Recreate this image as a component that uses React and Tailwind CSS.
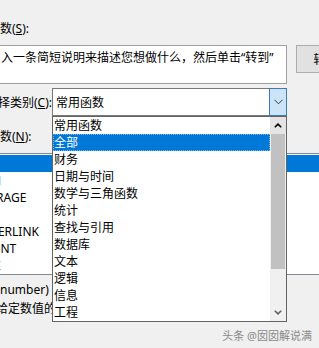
export default function App() {
  const categories = [
    "常用函数",
    "全部",
    "财务",
    "日期与时间",
    "数学与三角函数",
    "统计",
    "查找与引用",
    "数据库",
    "文本",
    "逻辑",
    "信息",
    "工程",
  ];
  const functions = ["ABS", "SUM", "AVERAGE", "IF", "HYPERLINK", "COUNT", "MAX"];

  return (
    <div className="relative w-[319px] h-[348px] overflow-hidden bg-[#f0f0f0] text-[12px] text-black font-['Noto_Sans','Noto_Sans_CJK_SC',sans-serif]">
      <div className="flex flex-col pt-[20px]">
        <div className="h-[17px] leading-[17px]">
          数(<span className="underline">S</span>):
        </div>

        <div className="flex items-start mt-[8px]">
          <div className="w-[287px] h-[39px] shrink-0 bg-white border-y border-r border-[#a0a0a0] pl-[1px] pt-[3px] leading-[17px] whitespace-nowrap overflow-hidden">
            入一条简短说明来描述您想做什么，然后单击“转到”
          </div>
          <button className="ml-[9px] w-[75px] h-[28px] shrink-0 bg-[#e1e1e1] border border-[#adadad] leading-[17px]">
            转到(G)
          </button>
        </div>

        <div className="flex items-center mt-[4px] h-[28px]">
          <div className="w-[52px] shrink-0 -ml-[2px] pl-0 leading-[17px] whitespace-nowrap">
            择类别(<span className="underline">C</span>):
          </div>
          <div className="flex w-[235px] h-[28px] shrink-0 ml-[2px] bg-white border border-[#7a7a7a]">
            <div className="flex-1 pl-[3px] flex items-center leading-[17px]">常用函数</div>
            <div className="w-[18px] -my-px -mr-px flex items-center justify-center bg-[#cce4f7] border border-[#3d7ab8]">
              <svg width="9" height="6" viewBox="0 0 9 6">
                <path d="M0.5 0.8 L4.5 4.8 L8.5 0.8" fill="none" stroke="#3c3c3c" strokeWidth="1" />
              </svg>
            </div>
          </div>
        </div>

        <div className="mt-[12px] h-[17px] leading-[17px]">
          数(<span className="underline">N</span>):
        </div>

        <div className="mt-[8px] -ml-[30px] w-[420px] bg-white border-y border-[#828790] pt-[1px]">
          {functions.map((f, i) => (
            <div
              key={f}
              className={
                i === 0
                  ? "h-[17px] leading-[17px] pl-[5px] bg-[#0078d7] text-white"
                  : "h-[17px] leading-[17px] pl-[5px]"
              }
            >
              {f}
            </div>
          ))}
        </div>

        <div className="mt-[6px] h-[17px] leading-[17px] whitespace-nowrap">number)</div>
        <div className="mt-[2px] -ml-[4px] h-[17px] leading-[17px] whitespace-nowrap">
          给定数值的绝对值，即不带符号的数值
        </div>
      </div>

      <div className="absolute left-[52px] top-[116px] w-[235px] h-[206px] flex bg-white border border-[#646464]">
        <div className="flex-1 flex flex-col">
          {categories.map((c) => (
            <div
              key={c}
              className={
                c === "全部"
                  ? "h-[17px] leading-[15px] pl-0 bg-[#0078d7] text-white border border-dotted border-[#7fb3e6]"
                  : "h-[17px] leading-[17px] pl-[1px]"
              }
            >
              {c}
            </div>
          ))}
        </div>
        <div className="w-[16px] flex flex-col bg-[#f0f0f0]">
          <div className="h-[17px] flex items-center justify-center bg-[#e4e4e4]">
            <svg width="8" height="5" viewBox="0 0 8 5">
              <path d="M0.8 4.3 L4 1.2 L7.2 4.3" fill="none" stroke="#000" strokeWidth="1.6" />
            </svg>
          </div>
          <div className="h-[135px] mx-[1px] bg-[#c1c1c1]" />
          <div className="flex-1" />
          <div className="h-[17px] flex items-center justify-center">
            <svg width="8" height="5" viewBox="0 0 8 5">
              <path d="M0.8 0.7 L4 3.8 L7.2 0.7" fill="none" stroke="#606060" strokeWidth="1.6" />
            </svg>
          </div>
        </div>
      </div>

      <div className="absolute right-[7px] bottom-[5px] text-[11px] leading-[14px] text-[#8a8a8a] whitespace-nowrap">
        头条 @囡囡解说满
      </div>
    </div>
  );
}
